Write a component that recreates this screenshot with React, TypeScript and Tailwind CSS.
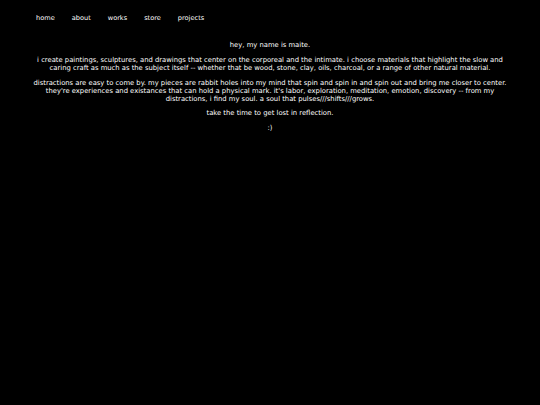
export default function App() {
  const links = ['home', 'about', 'works', 'store', 'projects'];

  return (
    <div className="min-h-screen bg-black text-white font-['DejaVu_Sans',Verdana,sans-serif] text-[6.8px] leading-[8px]">
      {/* nav */}
      <nav className="flex gap-[17px] pl-[36px] pt-[14px]">
        {links.map((l) => (
          <a key={l} href="#" className="text-[6.6px] leading-[8px]">
            {l}
          </a>
        ))}
      </nav>

      {/* intro */}
      <div className="mt-[19px] px-[20px] text-center flex flex-col gap-[7px]">
        <p className="whitespace-nowrap">hey, my name is maite.</p>
        <p className="whitespace-nowrap">
          i create paintings, sculptures, and drawings that center on the corporeal and the intimate. i choose materials that highlight the slow and
          <br />
          caring craft as much as the subject itself -- whether that be wood, stone, clay, oils, charcoal, or a range of other natural material.
        </p>
        <p className="whitespace-nowrap">
          distractions are easy to come by. my pieces are rabbit holes into my mind that spin and spin in and spin out and bring me closer to center.
          <br />
          they're experiences and existances that can hold a physical mark. it's labor, exploration, meditation, emotion, discovery -- from my
          <br />
          distractions, i find my soul. a soul that pulses///shifts///grows.
        </p>
        <p className="-mt-px">take the time to get lost in reflection.</p>
        <p>:)</p>
      </div>
    </div>
  );
}
